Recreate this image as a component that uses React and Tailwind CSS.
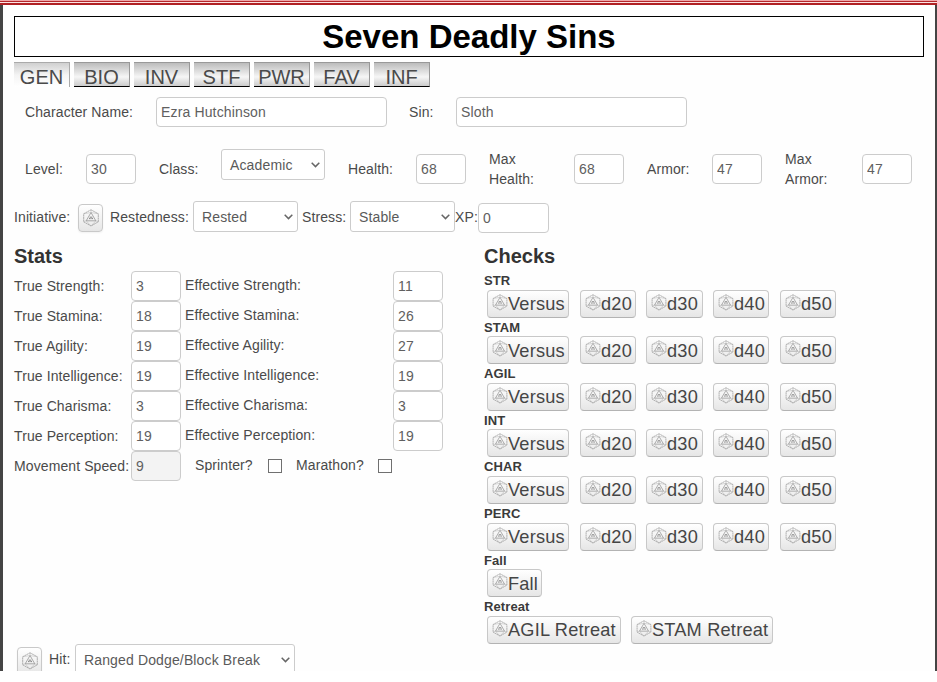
import React from "react";

function Die({ className }) {
  return (
    <svg viewBox="0 0 16 18" className={className} fill="none" stroke="#868686" strokeWidth="0.65">
      <path d="M8 .8 15.300 4.800v8L8 17 .7 12.800v-8z" strokeDasharray="2 .4" />
      <path d="M8 3.500 12.800 11.800H3.200z" stroke="#808080" />
      <path d="M8 .8v2.700M.7 4.800 8 3.500M15.300 4.800 8 3.500M.7 12.800l2.500-1L8 17l4.800-5.200 2.500 1" stroke="#b0b0b0" strokeWidth="0.5" />
      <path d="M6 9.600h1.600M8.400 9.600h1.600M6.700 8.200h2.600" stroke="#757575" strokeWidth="0.9" />
    </svg>
  );
}

function Field({ value, className = "w-[50px]", disabled }) {
  return (
    <input
      defaultValue={value}
      disabled={disabled}
      className={`${className} ${disabled ? "bg-[#f3f3f3]" : "bg-white"} block h-[30px] shrink-0 rounded-[4px] border border-[#ccc] px-[4px] text-[14px] tracking-[0.15px] text-[#606060] outline-none`}
    />
  );
}

function Select({ value, className }) {
  return (
    <div className={`${className} flex h-[31px] shrink-0 items-center justify-between rounded-[3px] border border-[#ccc] bg-white pr-[4px] pl-[8px] text-[14px] tracking-[0.14px] text-[#5a5a5a]`}>
      <span className="pt-px whitespace-nowrap">{value}</span>
      <svg viewBox="0 0 9 6" className="h-[6px] w-[9px]" fill="none" stroke="#666" strokeWidth="1.500">
        <path d="M.7 .8 4.500 4.600 8.300 .8" />
      </svg>
    </div>
  );
}

function IconButton({ className }) {
  return (
    <button className={`${className} flex h-[28px] w-[25px] shrink-0 items-center justify-center rounded-[4px] border border-[#c9c9c9] bg-linear-to-b from-white to-[#e6e6e6] shadow-xs`}>
      <Die className="mb-px h-[18px] w-[16px]" />
    </button>
  );
}

function RollButton({ label, className }) {
  return (
    <button className={`${className} flex h-[28px] shrink-0 items-center rounded-[4px] border border-[#c8c8c8] border-b-[#b3b3b3] bg-linear-to-b from-white to-[#e6e6e6] pl-[4px] text-[18.2px] leading-[20px] tracking-[0.2px] whitespace-nowrap text-[#454545]`}>
      <Die className="mb-[3px] h-[17px] w-[16px] shrink-0" />
      <span className="pt-px">{label}</span>
    </button>
  );
}

const tabs = ["BIO", "INV", "STF", "PWR", "FAV", "INF"];
const stats = [
  ["Strength", 3, 11],
  ["Stamina", 18, 26],
  ["Agility", 19, 27],
  ["Intelligence", 19, 19],
  ["Charisma", 3, 3],
  ["Perception", 19, 19],
];
const checks = ["STR", "STAM", "AGIL", "INT", "CHAR", "PERC"];

function Label({ children, className }) {
  return <label className={`${className} shrink-0 leading-[20px] tracking-[0.1px]`}>{children}</label>;
}

function CheckHeading({ children }) {
  return <h3 className="h-[18.600px] text-[13px] leading-[20px] font-bold tracking-[0.1px] text-[#3a3a3a]">{children}</h3>;
}

export default function App() {
  return (
    <div className="h-[682px] w-[937px] overflow-hidden bg-white font-['Liberation_Sans',Arial,sans-serif] text-[14px] text-[#4a4a4a]">
      <div className="h-px bg-[#f0a5a8]" />
      <div className="h-px bg-[#b3262b]" />
      <div className="h-px bg-[#fbe3e3]" />
      <div className="h-[2px] bg-[#b02024]" />
      <div className="h-[666px] overflow-hidden border-r-2 border-l-[3px] border-[#444] bg-[#fefefe] pt-[11px] pl-[11px]">
        <h1 className="flex h-[41px] w-[910px] items-center justify-center border border-black bg-white text-[33px] leading-none font-bold text-black">
          Seven Deadly Sins
        </h1>
        <div className="mt-[5px] flex gap-[4px] text-[20px] leading-[28px] text-[#4a4a4a]">
          <div className="h-[25px] w-[56px] border-t border-r border-[#aaa] bg-linear-to-b from-[#d0d0d0] via-[#f4f4f4] to-white text-center">GEN</div>
          {tabs.map((t) => (
            <div key={t} className="h-[25px] w-[56px] border-t border-r border-b border-[#999] border-b-black bg-linear-to-b from-[#bcbcbc] via-[#f6f6f6] via-60% to-[#cccccc] text-center">
              {t}
            </div>
          ))}
        </div>

        <div className="mt-[10px] flex h-[30px] items-center pl-[11px]">
          <Label className="w-[131px]">Character Name:</Label>
          <Field value="Ezra Hutchinson" className="w-[231px]" />
          <Label className="ml-[22px] w-[47px]">Sin:</Label>
          <Field value="Sloth" className="w-[231px]" />
        </div>

        <div className="mt-[22px] flex h-[40px] items-center pl-[11px]">
          <Label className="w-[61px]">Level:</Label>
          <Field value="30" />
          <Label className="ml-[23px] w-[62px]">Class:</Label>
          <Select value="Academic" className="mb-[9px] w-[104px]" />
          <Label className="ml-[23px] w-[68px]">Health:</Label>
          <Field value="68" />
          <Label className="ml-[23px] w-[85px]">Max<br />Health:</Label>
          <Field value="68" />
          <Label className="ml-[23px] w-[65px]">Armor:</Label>
          <Field value="47" />
          <Label className="ml-[23px] w-[77px]">Max<br />Armor:</Label>
          <Field value="47" />
        </div>

        <div className="mt-[12px] flex h-[32px] items-start">
          <Label className="mt-[6px] w-[64px]">Initiative:</Label>
          <IconButton className="mt-[3px]" />
          <Label className="mt-[6px] ml-[7px] w-[83px]">Restedness:</Label>
          <Select value="Rested" className="w-[105px]" />
          <Label className="mt-[6px] ml-[4px] w-[48px]">Stress:</Label>
          <Select value="Stable" className="w-[105px]" />
          <Label className="mt-[6px] w-[23px]">XP:</Label>
          <Field value="0" className="mt-[2px] w-[71px]" />
        </div>

        <div className="mt-[11px] flex">
          <div className="w-[470px]">
            <h2 className="h-[27px] text-[20px] leading-[24px] font-bold text-[#333]">Stats</h2>
            {stats.map(([name, real, effective]) => (
              <div key={name} className="flex h-[30px]">
                <Label className="mt-[5px] w-[117px]">True {name}:</Label>
                <Field value={real} />
                <Label className="mt-[4px] ml-[4px] w-[208px]">Effective {name}:</Label>
                <Field value={effective} />
              </div>
            ))}
            <div className="flex h-[30px]">
              <Label className="mt-[5px] w-[117px] whitespace-nowrap">Movement Speed:</Label>
              <Field value="9" disabled />
              <Label className="mt-[4px] ml-[14px] w-[73px]">Sprinter?</Label>
              <span className="mt-[8px] h-[14px] w-[14px] border border-[#707070] bg-white" />
              <Label className="mt-[4px] ml-[14px] w-[82px]">Marathon?</Label>
              <span className="mt-[8px] h-[14px] w-[14px] border border-[#707070] bg-white" />
            </div>
            <div className="mt-[163px] flex items-start">
              <IconButton className="mt-[3px] ml-[3px]" />
              <Label className="mt-[5px] ml-[7px] w-[26px]">Hit:</Label>
              <Select value="Ranged Dodge/Block Break" className="w-[220px]" />
            </div>
          </div>

          <div>
            <h2 className="h-[27px] text-[20px] leading-[24px] font-bold text-[#333]">Checks</h2>
            {checks.map((c) => (
              <div key={c} className="h-[46.600px]">
                <CheckHeading>{c}</CheckHeading>
                <div className="flex pl-[3px]">
                  <RollButton label="Versus" className="w-[82px]" />
                  <RollButton label="d20" className="ml-[11px] w-[56px]" />
                  <RollButton label="d30" className="ml-[10px] w-[57px]" />
                  <RollButton label="d40" className="ml-[10px] w-[56px]" />
                  <RollButton label="d50" className="ml-[11px] w-[56px]" />
                </div>
              </div>
            ))}
            <div className="h-[46.600px]">
              <CheckHeading>Fall</CheckHeading>
              <div className="flex pl-[3px]">
                <RollButton label="Fall" className="w-[55px]" />
              </div>
            </div>
            <div>
              <CheckHeading>Retreat</CheckHeading>
              <div className="flex gap-[10px] pl-[3px]">
                <RollButton label="AGIL Retreat" className="w-[134px]" />
                <RollButton label="STAM Retreat" className="w-[142px]" />
              </div>
            </div>
          </div>
        </div>
      </div>
    </div>
  );
}
